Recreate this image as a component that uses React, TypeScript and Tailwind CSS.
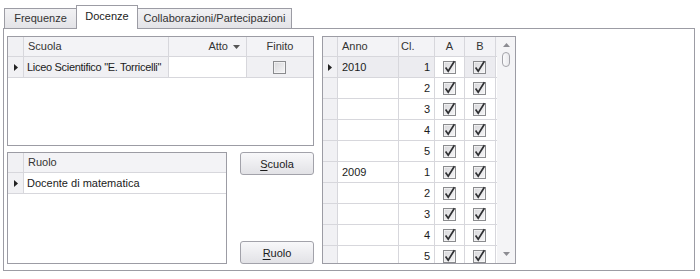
import React from 'react';

const Check: React.FC<{ checked?: boolean }> = ({ checked }) => (
  <svg width="14" height="14" viewBox="0 0 14 14" className="block">
    <defs>
      <linearGradient id="cbg" x1="0" y1="0" x2="1" y2="1">
        <stop offset="0" stopColor="#d6d6d9" />
        <stop offset="1" stopColor="#f7f7f8" />
      </linearGradient>
    </defs>
    <rect x="0.5" y="1.5" width="12" height="12" fill="url(#cbg)" stroke="#8a8b8e" />
    <rect x="1.5" y="2.5" width="10" height="10" fill="none" stroke="#fbfbfb" strokeWidth="0.6" />
    {checked && (
      <path d="M2.6 7.6 L5.2 11.2 L11.4 1.2" fill="none" stroke="#2f3033" strokeWidth="1.7" strokeLinejoin="miter" />
    )}
  </svg>
);

const Indicator: React.FC<{ on?: boolean }> = ({ on }) => (
  <div className="w-[16px] shrink-0 h-full bg-[#f1f1f4] border-r border-[#d7d7dc] flex items-center justify-center">
    {on && (
      <svg width="4" height="7" viewBox="0 0 4 7">
        <path d="M0 0 L4 3.5 L0 7 Z" fill="#222" />
      </svg>
    )}
  </div>
);

const tabs = ['Frequenze', 'Docenze', 'Collaborazioni/Partecipazioni'];

const yearRows = [
  ['2010', 1],
  ['', 2],
  ['', 3],
  ['', 4],
  ['', 5],
  ['2009', 1],
  ['', 2],
  ['', 3],
  ['', 4],
  ['', 5],
] as const;

export default function App() {
  return (
    <div
      className="w-[700px] h-[279px] bg-white pt-[5px] pl-[3px] text-[11px] text-[#1b1b1b] overflow-hidden"
      style={{ fontFamily: '"Liberation Sans", Arial, sans-serif' }}
    >
      {/* tab strip */}
      <div className="flex items-start h-[23px] pl-[1px] relative z-10">
        {tabs.map((t, i) =>
          i === 1 ? (
            <div
              key={t}
              className="h-[24px] w-[62px] bg-white border border-b-0 border-[#9c9ca4] flex items-center justify-center pb-[2px] text-[#1b1b1b]"
            >
              {t}
            </div>
          ) : (
            <div
              key={t}
              className={`mt-[3px] h-[20px] bg-gradient-to-b from-[#f2f2f4] to-[#e3e3e7] border-t border-[#9c9ca4] flex items-center justify-center text-[#333] ${
                i === 0 ? 'w-[72px] border-l' : 'w-[154px] border-r'
              }`}
            >
              {t}
            </div>
          )
        )}
      </div>

      {/* panel */}
      <div className="w-[692px] h-[243px] border border-[#9c9ca4] bg-white pt-[7px] pl-[3px] flex gap-[8px]">
        {/* left column */}
        <div className="w-[307px] flex flex-col gap-[6px]">
          {/* Scuola grid */}
          <div className="h-[110px] border border-[#9c9ca4] bg-white flex flex-col">
            <div className="h-[20px] flex border-b border-[#d7d7dc] bg-[#f3f3f6] text-[#333]">
              <Indicator />
              <div className="w-[145px] px-[4px] flex items-center border-r border-[#d7d7dc]">Scuola</div>
              <div className="w-[78px] px-[6px] flex items-center justify-end gap-[5px] border-r border-[#d7d7dc]">
                Atto
                <svg width="7" height="4" viewBox="0 0 7 4">
                  <path d="M0 0 L7 0 L3.5 4 Z" fill="#555" />
                </svg>
              </div>
              <div className="flex-1 flex items-center justify-center">Finito</div>
            </div>
            <div className="h-[21px] flex border-b border-[#d7d7dc]">
              <Indicator on />
              <div className="w-[145px] px-[3px] flex items-center border-r border-[#d7d7dc] bg-[#f0f0f3] whitespace-nowrap overflow-hidden tracking-[-0.3px]">
                Liceo Scientifico "E. Torricelli"
              </div>
              <div className="w-[78px] border-r border-[#d7d7dc] bg-white" />
              <div className="flex-1 flex items-center justify-center bg-[#f0f0f3]">
                <Check />
              </div>
            </div>
          </div>

          {/* bottom row */}
          <div className="flex gap-[13px]">
            <div className="w-[220px] h-[112px] border border-[#9c9ca4] bg-white flex flex-col">
              <div className="h-[20px] flex border-b border-[#d7d7dc] bg-[#f3f3f6] text-[#333]">
                <Indicator />
                <div className="flex-1 px-[4px] flex items-center">Ruolo</div>
              </div>
              <div className="h-[21px] flex border-b border-[#d7d7dc]">
                <Indicator on />
                <div className="flex-1 px-[3px] flex items-center">Docente di matematica</div>
              </div>
            </div>
            <div className="w-[74px] h-[112px] flex flex-col justify-between">
              <button className="h-[23px] w-full rounded-[3px] border border-[#a2a2aa] bg-gradient-to-b from-[#f8f8fa] to-[#e2e2e6] text-[#1b1b1b] pt-[1px]">
                <span className="underline underline-offset-2">S</span>cuola
              </button>
              <button className="h-[23px] w-full rounded-[3px] border border-[#a2a2aa] bg-gradient-to-b from-[#f8f8fa] to-[#e2e2e6] text-[#1b1b1b] pt-[1px]">
                <span className="underline underline-offset-2">R</span>uolo
              </button>
            </div>
          </div>
        </div>

        {/* year grid */}
        <div className="w-[194px] h-[228px] border border-[#9c9ca4] bg-white flex">
          <div className="w-[174px] flex flex-col overflow-hidden">
            <div className="h-[20px] shrink-0 flex border-b border-[#d7d7dc] bg-[#f3f3f6] text-[#333]">
              <div className="w-[15px] shrink-0 bg-[#f1f1f4] border-r border-[#d7d7dc]" />
              <div className="w-[61px] px-[4px] flex items-center border-r border-[#d7d7dc]">Anno</div>
              <div className="w-[36px] px-[2px] flex items-center border-r border-[#d7d7dc]">Cl.</div>
              <div className="w-[30px] flex items-center justify-center border-r border-[#d7d7dc]">A</div>
              <div className="w-[31px] flex items-center justify-center border-r border-[#d7d7dc]">B</div>
            </div>
            {yearRows.map(([y, n], i) => {
              const sel = i === 0;
              return (
                <div key={i} className="h-[21px] shrink-0 flex border-b border-[#d7d7dc]">
                  <div className="w-[15px] shrink-0 bg-[#f1f1f4] border-r border-[#d7d7dc] flex items-center justify-center">
                    {sel && (
                      <svg width="4" height="7" viewBox="0 0 4 7">
                        <path d="M0 0 L4 3.5 L0 7 Z" fill="#222" />
                      </svg>
                    )}
                  </div>
                  <div className={`w-[61px] px-[4px] flex items-center border-r border-[#d7d7dc] ${sel ? 'bg-[#ececf0]' : ''}`}>
                    {y}
                  </div>
                  <div className={`w-[36px] px-[4px] flex items-center justify-end border-r border-[#d7d7dc] ${sel ? 'bg-[#ececf0]' : ''}`}>
                    {n}
                  </div>
                  <div className="w-[30px] flex items-center justify-center border-r border-[#d7d7dc]">
                    <Check checked />
                  </div>
                  <div className={`w-[31px] flex items-center justify-center border-r border-[#d7d7dc] ${sel ? 'bg-[#ececf0]' : ''}`}>
                    <Check checked />
                  </div>
                </div>
              );
            })}
          </div>
          {/* scrollbar */}
          <div className="flex-1 bg-[#f4f4f6] flex flex-col items-center pt-[6px] pb-[7px]">
            <svg width="7" height="4" viewBox="0 0 7 4">
              <path d="M0 4 L7 4 L3.5 0 Z" fill="#8c8c92" />
            </svg>
            <div className="mt-[5px] w-[8px] h-[15px] rounded-[4px] border border-[#a4a4aa] bg-gradient-to-r from-[#fbfbfc] to-[#e9e9ec]" />
            <div className="flex-1" />
            <svg width="7" height="4" viewBox="0 0 7 4">
              <path d="M0 0 L7 0 L3.5 4 Z" fill="#8c8c92" />
            </svg>
          </div>
        </div>
      </div>
    </div>
  );
}
